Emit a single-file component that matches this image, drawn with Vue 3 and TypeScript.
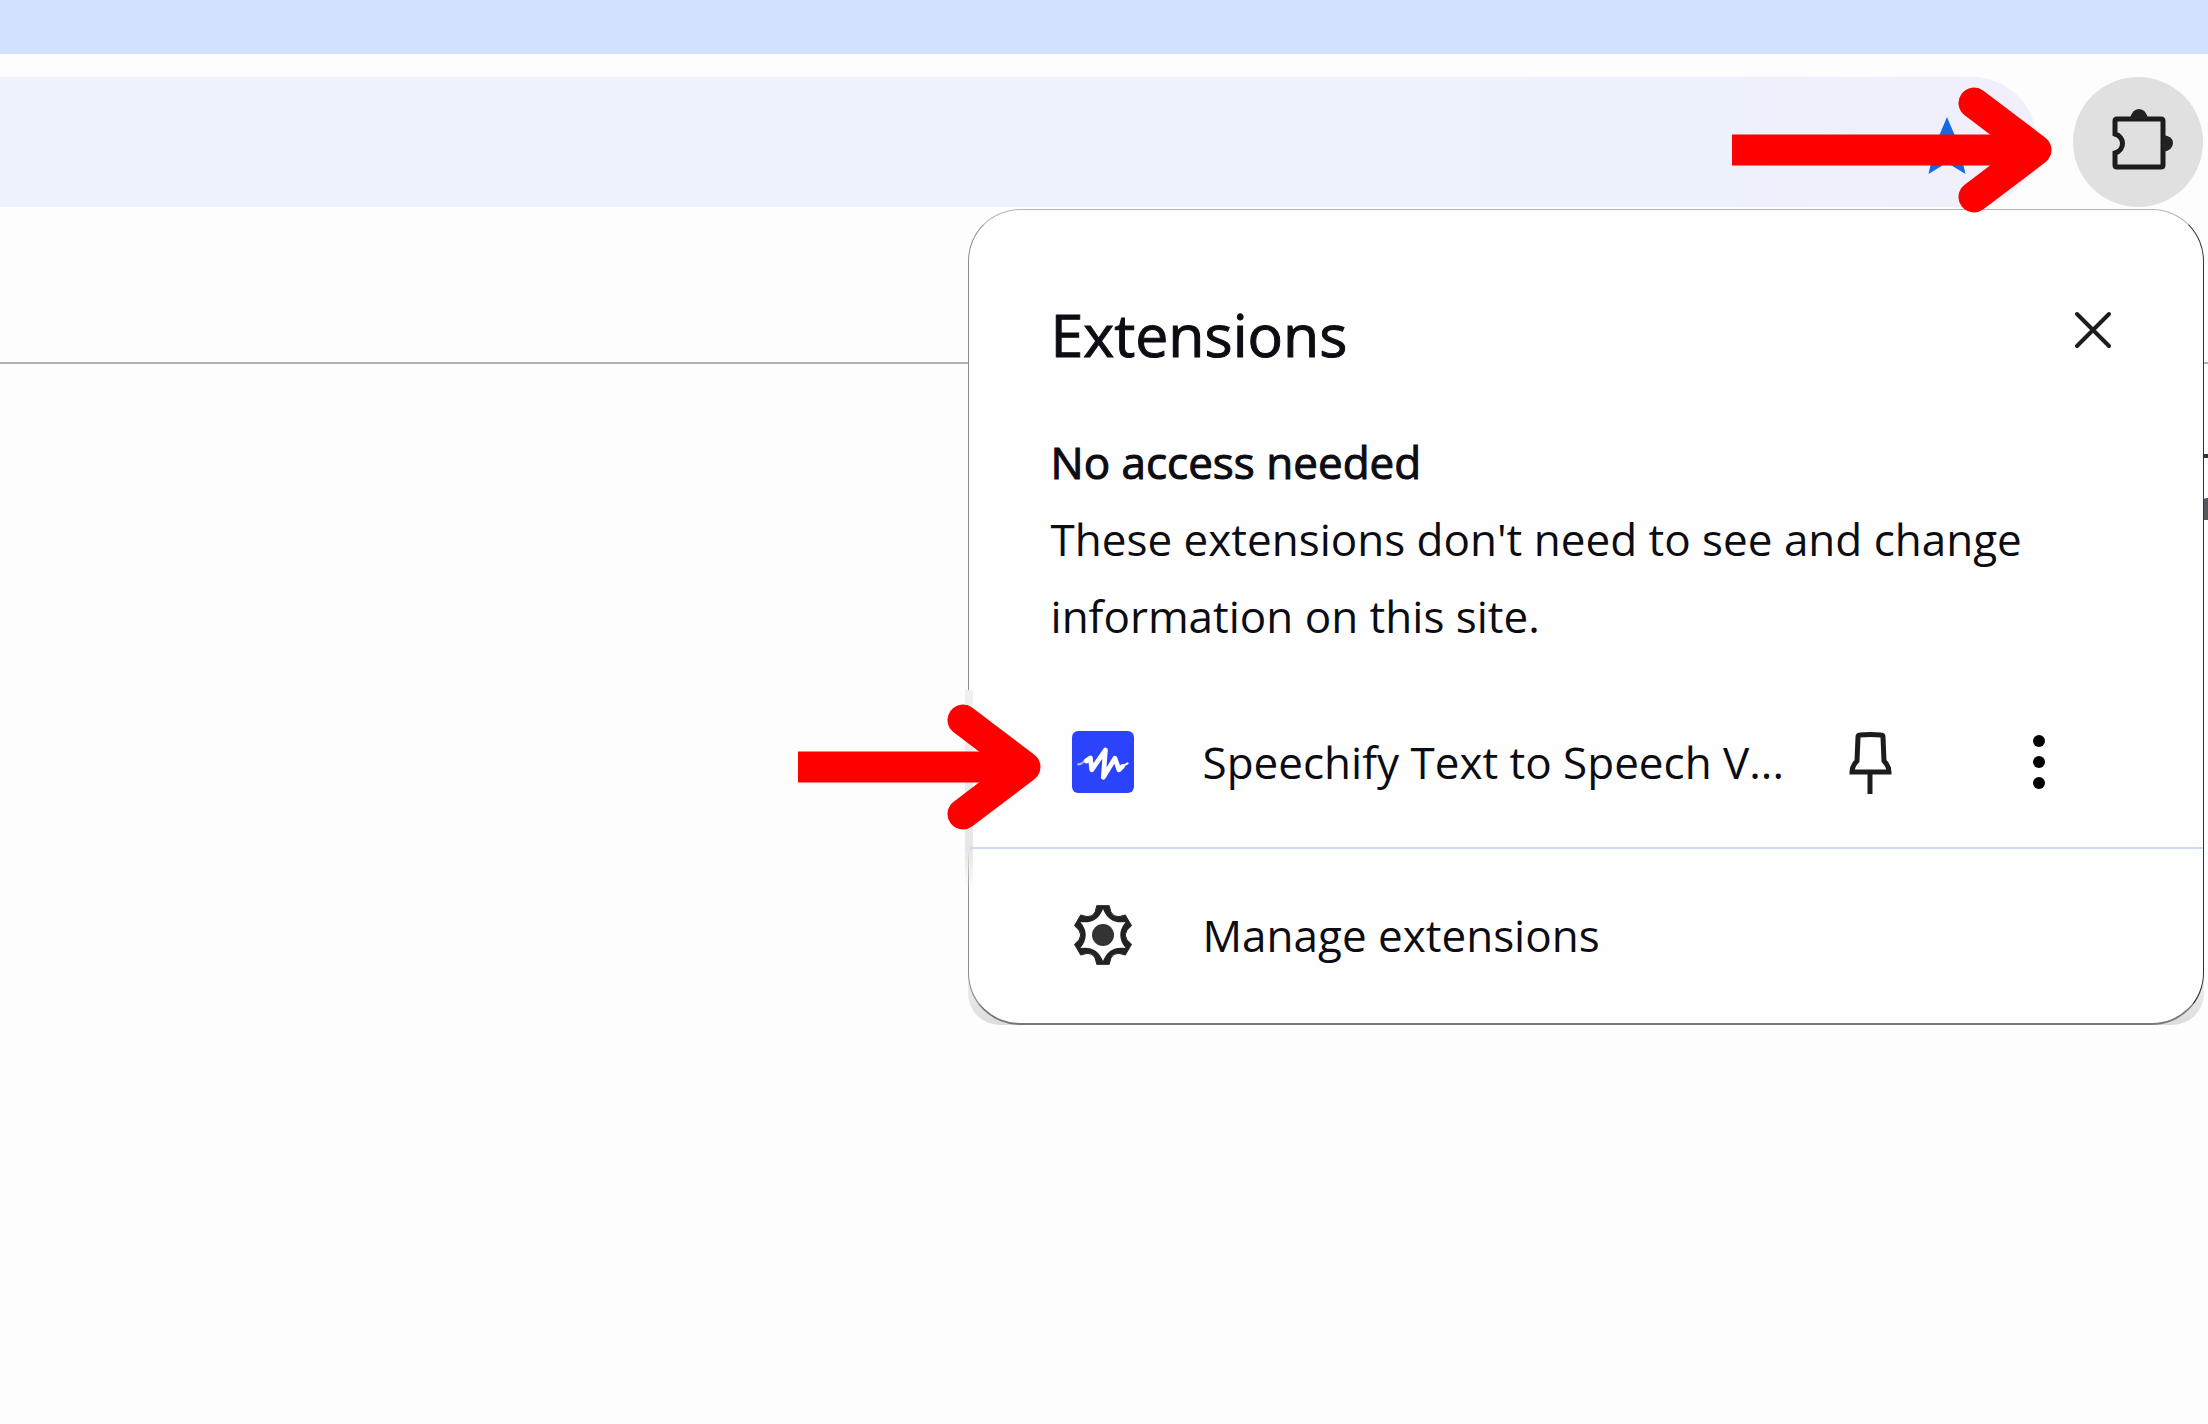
<script setup lang="ts">
const point = (radius: number, degrees: number): string => {
  const a = (degrees * Math.PI) / 180
  return `${(32 + radius * Math.sin(a)).toFixed(2)} ${(32 - radius * Math.cos(a)).toFixed(2)}`
}

const teeth = [0, 60, 120, 180, 240, 300]

const gearOuter =
  `M${point(30, -12)}` +
  teeth.map((t) => `L${point(30, t + 12)}Q${point(16, t + 30)} ${point(30, t + 48)}`).join('') +
  'Z'

const gearInner =
  `M${point(26, 0)}` + teeth.map((t) => `Q${point(12, t + 30)} ${point(26, t + 60)}`).join('') + 'Z'
</script>

<template>
  <div class="browser">
    <div class="tab-strip"></div>
    <header class="toolbar">
      <div class="omnibox">
        <svg class="star" viewBox="0 0 24 24" aria-hidden="true">
          <path d="M12 17.27 18.18 21l-1.64-7.03L21 10l-6.19-1.37L12 2 9.19 8.63 3 10l4.46 3.97L5.82 21z" />
        </svg>
      </div>
      <button class="extensions-button" type="button" aria-label="Extensions">
        <svg viewBox="0 0 66 66" aria-hidden="true">
          <path class="line" d="M9 12H53Q55 12 55 14V58Q55 60 53 60H9Q7 60 7 58V46C17 43 17 30 7 27V14Q7 12 9 12Z" />
          <path d="M22 12Q24 2 31 2T40 12ZM55 28Q65 29 65 36T55 45Z" />
        </svg>
      </button>
      <svg class="arrow arrow-toolbar" viewBox="0 0 320 126" aria-hidden="true">
        <path d="M0 63H300" />
        <path class="arrow-head" d="M242 16 304 63 242 110" />
      </svg>
    </header>
    <main class="page">
      <span class="page-rule"></span>
      <span class="page-shape"></span>
    </main>

    <div class="popup-layer">
      <section class="popup" aria-labelledby="popup-title">
        <div class="popup-head">
          <h1 id="popup-title">Extensions</h1>
          <button class="close" type="button" aria-label="Close">
            <svg viewBox="0 0 44 44" aria-hidden="true"><path class="line" d="M6 6 38 38M38 6 6 38" /></svg>
          </button>
        </div>
        <div class="access">
          <h2>No access needed</h2>
          <p>These extensions don't need to see and change information on this site.</p>
        </div>
        <div class="row extension">
          <svg class="arrow arrow-row" viewBox="0 0 243 126" aria-hidden="true">
            <path d="M0 63H223" />
            <path class="arrow-head" d="M165 16 227 63 165 110" />
          </svg>
          <svg class="row-icon" viewBox="0 0 182 182" aria-hidden="true">
            <rect width="182" height="182" rx="18" fill="#2b44fb" />
            <path class="wave-tail" d="M18 98Q30 98 40 84" />
            <path class="wave" d="M42 88 54 79 58 114 98 56 92 136 126 80 138 114 148 104" />
            <path class="wave-tip" d="M144 106 163 95" />
          </svg>
          <button class="row-label" type="button">Speechify Text to Speech V...</button>
          <button class="pin" type="button" aria-label="Pin">
            <svg viewBox="0 0 49 66" aria-hidden="true">
              <path class="line" d="M14 6Q24 5 35 6 37 6 37 8L38 32Q43 37 43 43H6Q6 37 11 32L12 8Q12 6 14 6ZM24 43V65" />
            </svg>
          </button>
          <button class="more" type="button" aria-label="More options">
            <svg viewBox="0 0 12 56" aria-hidden="true">
              <circle cx="6" cy="7" r="6" /><circle cx="6" cy="28" r="6" /><circle cx="6" cy="49" r="6" />
            </svg>
          </button>
        </div>
        <div class="row manage">
          <svg class="row-icon" viewBox="1 1 62 62" aria-hidden="true">
            <path :d="gearOuter" stroke-linejoin="round" stroke="#222" stroke-width="1" fill="#222" />
            <path :d="gearInner" fill="#fefefe" />
            <circle cx="32" cy="32" r="11" fill="#333" />
          </svg>
          <button class="row-label" type="button">Manage extensions</button>
        </div>
      </section>
    </div>
  </div>
</template>

<style>
body {
  margin: 0;
  background: #fdfdfd;
}
</style>

<style scoped>
.browser {
  position: relative;
  min-height: 100vh;
  overflow: hidden;
  background: #fdfdfd;
  color: #0c0c12;
  font-family: "Open Sans", "Noto Sans", sans-serif;
}

button {
  margin: 0;
  padding: 0;
  border: 0;
  background: none;
  color: inherit;
  font: inherit;
  text-align: left;
  cursor: pointer;
}

svg {
  display: block;
}

.line {
  fill: none;
  stroke: #1c1c1c;
  stroke-width: 5;
}

.tab-strip {
  height: 54px;
  background: #d2e1ff;
}

.toolbar {
  position: relative;
  display: flex;
  gap: 36px;
  padding: 23px 5px 155px 0;
  border-bottom: 2px solid #b0b0b0;
}

.omnibox {
  flex: 1;
  display: flex;
  align-items: center;
  justify-content: flex-end;
  height: 130px;
  padding: 10px 54px 0 0;
  box-sizing: border-box;
  border-radius: 0 65px 65px 0;
  background: linear-gradient(90deg, #edf2fc 0 60%, #edf1fc 85%, #f1effb);
}

.star {
  width: 72px;
  height: 72px;
  fill: #1668e3;
}

.extensions-button {
  display: grid;
  place-items: center;
  width: 130px;
  height: 130px;
  padding: 0 0 4px 5px;
  box-sizing: border-box;
  border-radius: 50%;
  background: #e0e0e0;
}

.extensions-button svg {
  width: 66px;
  height: 66px;
  fill: #222;
}

.arrow {
  position: absolute;
  z-index: 3;
  height: 126px;
  fill: none;
  stroke: #f00;
  stroke-width: 31;
}

.arrow-head {
  stroke-linecap: round;
  stroke-linejoin: round;
}

.arrow-toolbar {
  top: 33px;
  right: 156px;
  width: 320px;
}

.page {
  display: flex;
  flex-direction: column;
  align-items: flex-end;
  gap: 40px;
  padding-top: 90px;
}

.page-rule {
  width: 5px;
  height: 4px;
  background: #333;
}

.page-shape {
  width: 5px;
  height: 22px;
  border-radius: 4px 0 0 0;
  background: #55585c;
}

.popup-layer {
  position: absolute;
  z-index: 2;
  top: 209px;
  right: 4px;
  width: 56%;
}

.popup-layer::before {
  content: "";
  position: absolute;
  right: 0;
  bottom: 0;
  left: 0;
  height: 80px;
  border-radius: 0 0 32px 32px;
  background: linear-gradient(transparent, #dcdcdc);
}

.popup {
  position: relative;
  box-sizing: border-box;
  border: 1px solid #8c8c8c;
  border-top-color: #b4b4c4;
  border-right-color: #333;
  border-bottom: 2px solid #777;
  border-radius: 52px;
  background: #fefefe;
}

.popup::before {
  content: "";
  position: absolute;
  top: 480px;
  left: -4px;
  width: 8px;
  height: 200px;
  background: linear-gradient(#f0f0f0, #e6e6e6 80%, transparent);
}

.popup-head {
  display: flex;
  align-items: center;
  justify-content: space-between;
  padding: 82px 88px 0 82px;
}

h1,
h2,
p {
  margin: 0;
  font-weight: 400;
}

h1 {
  font-size: 59px;
  line-height: 84px;
  -webkit-text-stroke: 1px currentColor;
}

.close {
  margin-bottom: 8px;
}

.close svg {
  width: 44px;
  height: 44px;
}

.close .line {
  stroke-linecap: round;
  stroke-width: 4;
}

.access {
  padding: 48px 80px 0 82px;
  font-size: 44px;
  line-height: 77px;
}

h2 {
  font-size: 44px;
  line-height: 77px;
  -webkit-text-stroke: 1px currentColor;
}

.row {
  position: relative;
  display: flex;
  align-items: center;
  padding: 0 158px 0 103px;
  font-size: 44px;
  line-height: 64px;
}

.row-icon {
  flex: none;
  width: 62px;
  height: 62px;
  margin-right: 69px;
}

.row-label {
  flex: 1;
  white-space: nowrap;
}

.extension {
  padding-top: 74px;
  padding-bottom: 52px;
}

.arrow-row {
  top: 49px;
  left: -171px;
  width: 243px;
}

.wave,
.wave-tail,
.wave-tip {
  fill: none;
  stroke: #fff;
  stroke-width: 14;
  stroke-linecap: round;
  stroke-linejoin: round;
}

.wave-tail {
  stroke-width: 6;
  opacity: 0.6;
}

.wave-tip {
  stroke-width: 6;
}

.pin svg {
  width: 49px;
  height: 66px;
}

.more {
  margin-left: 138px;
}

.more svg {
  width: 12px;
  height: 56px;
}

.manage {
  padding-top: 54px;
  padding-bottom: 56px;
  border-top: 2px solid #cddaf2;
}
</style>
